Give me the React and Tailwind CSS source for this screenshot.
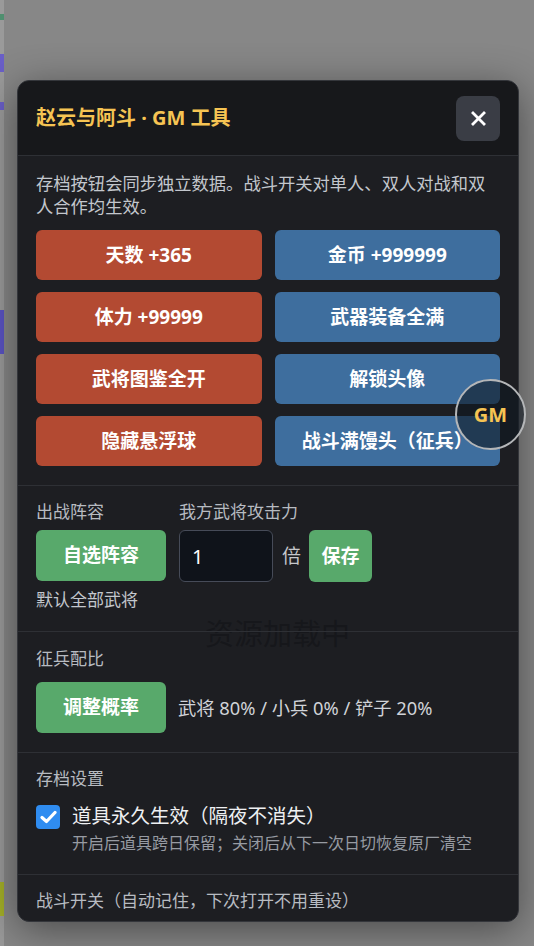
import React, { useState } from 'react'

const FONT = { fontFamily: '"Noto Sans", "Noto Sans CJK SC", sans-serif' }

const redButtons = ['天数 +365', '体力 +99999', '武将图鉴全开', '隐藏悬浮球']
const blueButtons = ['金币 +999999', '武器装备全满', '解锁头像', '战斗满馒头（征兵）']

function ActionButton({ label, tone }) {
  const color = tone === 'red' ? 'bg-[#b34a32]' : 'bg-[#3e6e9e]'
  return (
    <button className={`${color} h-[50px] rounded-md text-white text-[19px] font-bold`}>
      {label}
    </button>
  )
}

export default function App() {
  const [keepItems, setKeepItems] = useState(true)
  const [power, setPower] = useState('1')

  // interleave red / blue into the two-column grid
  const grid = redButtons.flatMap((r, i) => [
    { label: r, tone: 'red' },
    { label: blueButtons[i], tone: 'blue' }
  ])

  return (
    <div className="relative h-[946px] w-full overflow-hidden bg-[#878787] flex" style={FONT}>
      {/* page behind the overlay */}
      <div className="w-[4px] h-full bg-[#9a9a9a] flex flex-col">
        <div className="h-[14px]" />
        <div className="h-[6px] bg-[#4f8f6f]" />
        <div className="h-[34px]" />
        <div className="h-[18px] bg-[#6a5fc8]" />
        <div className="h-[30px]" />
        <div className="h-[8px] bg-[#6a5fc8]" />
        <div className="h-[200px]" />
        <div className="h-[44px] bg-[#5b54c4]" />
        <div className="h-[528px]" />
        <div className="h-[34px] bg-[#a4b028]" />
      </div>
      <div className="flex-1 pt-[612px] pl-[201px]">
        <div className="text-[29px] text-black">资源加载中</div>
      </div>

      {/* GM modal */}
      <div className="absolute left-[17px] top-[80px] w-[502px] h-[842px] rounded-xl border border-[#34363b] bg-[#17181c]/95 shadow-[0_8px_40px_rgba(0,0,0,0.45)] flex flex-col overflow-hidden">
        <div className="h-[75px] shrink-0 flex items-center justify-between px-[18px] bg-black/20 border-b border-[#2e3035]">
          <h2 className="text-[20px] font-bold text-[#f6c453]">赵云与阿斗 · GM 工具</h2>
          <button className="w-[44px] h-[45px] rounded-lg bg-[#3a3d45] flex items-center justify-center">
            <svg width="15" height="15" viewBox="0 0 15 15">
              <path d="M2 2 L13 13 M13 2 L2 13" stroke="#fff" strokeWidth="2.8" strokeLinecap="square" />
            </svg>
          </button>
        </div>

        <div className="flex-1 overflow-hidden">
          <section className="px-[18px] pt-[16px] pb-[19px] border-b border-[#2e3035]">
            <p className="text-[17.3px] leading-[23px] text-[#c3c7cd]">
              存档按钮会同步独立数据。战斗开关对单人、双人对战和双人合作均生效。
            </p>
            <div className="mt-[12px] grid grid-cols-2 gap-x-[13px] gap-y-[12px]">
              {grid.map(b => (
                <ActionButton key={b.label} label={b.label} tone={b.tone} />
              ))}
            </div>
          </section>

          <section className="px-[18px] pt-[14px] pb-[20px] border-b border-[#2e3035] flex gap-[13px]">
            <div className="flex flex-col">
              <div className="text-[17px] leading-[23px] text-[#b7bbc1]">出战阵容</div>
              <button className="mt-[7px] w-[130px] h-[51px] rounded-md bg-[#58a96b] text-white text-[19px] font-bold">
                自选阵容
              </button>
              <div className="mt-[7px] text-[17px] leading-[23px] text-[#c3c7cd]">默认全部武将</div>
            </div>
            <div className="flex flex-col">
              <div className="text-[17px] leading-[23px] text-[#b7bbc1]">我方武将攻击力</div>
              <div className="mt-[7px] flex items-center">
                <input
                  value={power}
                  onChange={e => setPower(e.target.value)}
                  className="w-[94px] h-[52px] rounded-md border border-[#464b58] bg-[#0f131a] px-[12px] text-[20px] text-white outline-none"
                />
                <span className="ml-[9px] text-[19px] text-[#c5c7cb]">倍</span>
                <button className="ml-[8px] w-[63px] h-[52px] rounded-md bg-[#58a96b] text-white text-[19px] font-bold">
                  保存
                </button>
              </div>
            </div>
          </section>

          <section className="px-[18px] pt-[15px] pb-[19px] border-b border-[#2e3035]">
            <div className="text-[17px] leading-[23px] text-[#b7bbc1]">征兵配比</div>
            <div className="mt-[12px] flex items-center">
              <button className="w-[130px] h-[51px] rounded-md bg-[#58a96b] text-white text-[19px] font-bold">
                调整概率
              </button>
              <span className="ml-[12px] text-[18.3px] text-[#d0d3d8]">武将 80% / 小兵 0% / 铲子 20%</span>
            </div>
          </section>

          <section className="px-[18px] pt-[14px] pb-[20px] border-b border-[#2e3035]">
            <div className="text-[17px] leading-[23px] text-[#b7bbc1]">存档设置</div>
            <label className="mt-[13px] flex items-start cursor-pointer">
              <span
                onClick={() => setKeepItems(v => !v)}
                className={`mt-[2px] w-[24px] h-[24px] rounded-[4px] flex items-center justify-center ${keepItems ? 'bg-[#2f8cf0]' : 'bg-[#2a2c31]'}`}
              >
                {keepItems && (
                  <svg width="17" height="14" viewBox="0 0 17 14">
                    <path d="M2 7.5 L6.5 11.5 L15 2.5" fill="none" stroke="#fff" strokeWidth="3.2" strokeLinecap="round" strokeLinejoin="round" />
                  </svg>
                )}
              </span>
              <span className="ml-[12px] flex flex-col">
                <span className="text-[19.5px] leading-[26px] text-[#eef0f2]">道具永久生效（隔夜不消失）</span>
                <span className="mt-[3px] text-[16px] leading-[22px] text-[#979ba2]">
                  开启后道具跨日保留；关闭后从下一次日切恢复原厂清空
                </span>
              </span>
            </label>
          </section>

          <section className="px-[18px] pt-[14px] pb-[19px]">
            <div className="text-[17px] leading-[23px] text-[#b7bbc1]">战斗开关（自动记住，下次打开不用重设）</div>
          </section>
        </div>
      </div>

      {/* floating GM ball */}
      <div className="absolute left-[455px] top-[379px] w-[71px] h-[71px] rounded-full border-2 border-[#b4b6b8] bg-[#0f1722]/60 flex items-center justify-center">
        <span className="text-[20px] font-bold text-[#f6c453]">GM</span>
      </div>
    </div>
  )
}
